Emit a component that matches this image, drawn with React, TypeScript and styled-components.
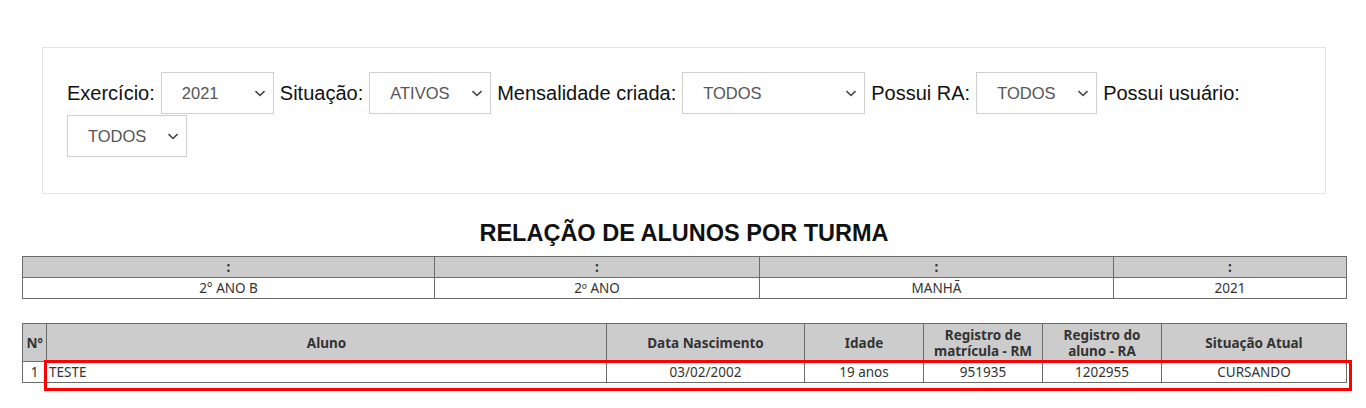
import styled, { createGlobalStyle } from 'styled-components'

const GlobalStyle = createGlobalStyle`
  body {
    margin: 0;
    background: #fff;
    font-family: "Liberation Sans", Arial, sans-serif;
    color: #111;
  }
`

const Page = styled.div`
  box-sizing: border-box;
  min-height: 408px;
  padding: 47px 20px 20px 22px;
`

const FilterPanel = styled.div`
  margin: 0 20px;
  padding: 24px 24px 36px;
  border: 1px solid #e3e3e3;
  display: flex;
  flex-wrap: wrap;
  align-items: center;
  column-gap: 6px;
  row-gap: 1px;
`

const Label = styled.label`
  font-size: 20px;
  color: #111;
  white-space: nowrap;
`

const SelectWrap = styled.span<{ $w: number }>`
  position: relative;
  display: inline-block;
  width: ${p => p.$w}px;
  height: 42px;
`

const Select = styled.select`
  appearance: none;
  width: 100%;
  height: 100%;
  box-sizing: border-box;
  border: 1px solid #cfcfcf;
  border-radius: 0;
  background: #fff;
  padding: 0 24px 0 20px;
  font-family: "Liberation Sans", Arial, sans-serif;
  font-size: 16.5px;
  color: #555;
  outline: none;
`

const Chevron = styled.svg`
  position: absolute;
  right: 8px;
  top: 18px;
  pointer-events: none;
`

const Title = styled.h2`
  margin: 26px 0 10px;
  text-align: center;
  font-size: 23.5px;
  line-height: 26px;
  font-weight: bold;
  color: #111;
`

const Table = styled.table`
  width: 100%;
  border-collapse: collapse;
  table-layout: fixed;
  font-family: "Noto Sans", "DejaVu Sans Condensed", sans-serif;
  font-stretch: condensed;
  font-size: 13.5px;
  color: #333;
`

const HeadCell = styled.th<{ $h: number }>`
  height: ${p => p.$h}px;
  padding: 0 2px;
  border: 1px solid #6b6b6b;
  background: #cccccc;
  font-weight: bold;
  line-height: 16px;
  text-align: center;
  box-sizing: border-box;
`

const Cell = styled.td<{ $left?: boolean }>`
  height: 21px;
  padding: 0 2px;
  border: 1px solid #6b6b6b;
  text-align: ${p => (p.$left ? 'left' : 'center')};
  line-height: 16px;
  box-sizing: border-box;
`

const StudentsBlock = styled.div`
  position: relative;
  margin-top: 24px;
`

const Highlight = styled.div`
  position: absolute;
  left: 22px;
  right: -6px;
  top: 37px;
  height: 31px;
  border: 3px solid #ff0000;
  box-sizing: border-box;
  pointer-events: none;
`

const filters = [
  { label: 'Exercício:', value: '2021', width: 113 },
  { label: 'Situação:', value: 'ATIVOS', width: 122 },
  { label: 'Mensalidade criada:', value: 'TODOS', width: 183 },
  { label: 'Possui RA:', value: 'TODOS', width: 121 },
  { label: 'Possui usuário:', value: 'TODOS', width: 120 },
]

const classInfo = ['2° ANO B', '2º ANO', 'MANHÃ', '2021']
const classCols = [412, 325, 354, 233]

const studentCols = [24, 560, 198, 119, 119, 119, 185]
const studentHead = [
  'Nº',
  'Aluno',
  'Data Nascimento',
  'Idade',
  'Registro de matrícula - RM',
  'Registro do aluno - RA',
  'Situação Atual',
]

const students = [
  { n: '1', name: 'TESTE', birth: '03/02/2002', age: '19 anos', rm: '951935', ra: '1202955', status: 'CURSANDO' },
]

const ChevronIcon = () => (
  <Chevron width="12" height="7" viewBox="0 0 12 7">
    <path d="M1.5 1.2 L6 5.5 L10.5 1.2" fill="none" stroke="#444" strokeWidth="1.6" />
  </Chevron>
)

const App = () => {
  return (
    <Page>
      <GlobalStyle />
      <FilterPanel>
        {filters.map(f => (
          <>
            <Label key={f.label + 'l'}>{f.label}</Label>
            <SelectWrap key={f.label + 's'} $w={f.width}>
              <Select defaultValue={f.value}>
                <option>{f.value}</option>
              </Select>
              <ChevronIcon />
            </SelectWrap>
          </>
        ))}
      </FilterPanel>

      <Title>RELAÇÃO DE ALUNOS POR TURMA</Title>

      <Table>
        <colgroup>
          {classCols.map((w, i) => <col key={i} width={w} />)}
        </colgroup>
        <thead>
          <tr>
            {classInfo.map((_, i) => <HeadCell key={i} $h={21}>:</HeadCell>)}
          </tr>
        </thead>
        <tbody>
          <tr>
            {classInfo.map(v => <Cell key={v}>{v}</Cell>)}
          </tr>
        </tbody>
      </Table>

      <StudentsBlock>
        <Table>
          <colgroup>
            {studentCols.map((w, i) => <col key={i} width={w} />)}
          </colgroup>
          <thead>
            <tr>
              {studentHead.map(h => <HeadCell key={h} $h={38}>{h}</HeadCell>)}
            </tr>
          </thead>
          <tbody>
            {students.map(s => (
              <tr key={s.n}>
                <Cell>{s.n}</Cell>
                <Cell $left>{s.name}</Cell>
                <Cell>{s.birth}</Cell>
                <Cell>{s.age}</Cell>
                <Cell>{s.rm}</Cell>
                <Cell>{s.ra}</Cell>
                <Cell>{s.status}</Cell>
              </tr>
            ))}
          </tbody>
        </Table>
        <Highlight />
      </StudentsBlock>
    </Page>
  )
}

export default App
